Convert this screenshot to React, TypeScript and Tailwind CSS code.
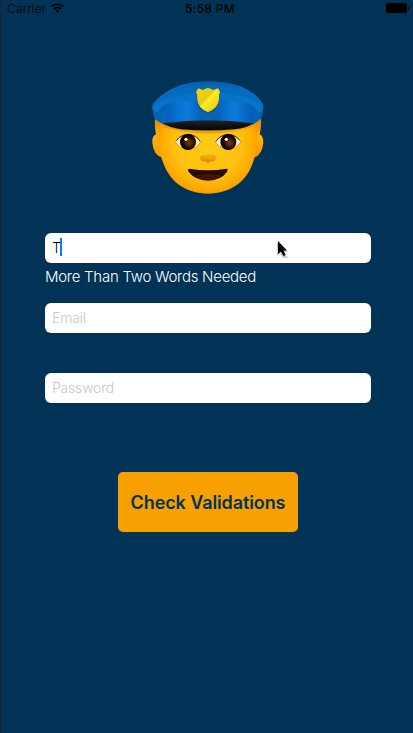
import React from "react";

function Officer() {
  return (
    <svg width="130" height="130" viewBox="0 0 390 390" aria-label="Police officer">
      <defs>
        <radialGradient id="face" cx="195" cy="215" r="168" gradientUnits="userSpaceOnUse">
          <stop offset="0" stopColor="#ffcb16" />
          <stop offset="0.6" stopColor="#ffc00f" />
          <stop offset="0.84" stopColor="#ffa900" />
          <stop offset="1" stopColor="#ee8500" />
        </radialGradient>
        <linearGradient id="ear" x1="0" y1="150" x2="0" y2="255" gradientUnits="userSpaceOnUse">
          <stop offset="0" stopColor="#ee8a00" />
          <stop offset="0.4" stopColor="#ffb30c" />
          <stop offset="1" stopColor="#f79a00" />
        </linearGradient>
        <linearGradient id="cap" x1="0" y1="28" x2="0" y2="130" gradientUnits="userSpaceOnUse">
          <stop offset="0" stopColor="#044c94" />
          <stop offset="0.25" stopColor="#0870c4" />
          <stop offset="1" stopColor="#0675d2" />
        </linearGradient>
        <linearGradient id="band" x1="50" y1="0" x2="340" y2="0" gradientUnits="userSpaceOnUse">
          <stop offset="0" stopColor="#0058ac" />
          <stop offset="0.2" stopColor="#0874d2" />
          <stop offset="0.28" stopColor="#0c7bdc" />
          <stop offset="0.42" stopColor="#0563b8" />
          <stop offset="0.6" stopColor="#0563b8" />
          <stop offset="0.77" stopColor="#0c7bdc" />
          <stop offset="1" stopColor="#0058ac" />
        </linearGradient>
        <linearGradient id="visor" x1="0" y1="140" x2="0" y2="175" gradientUnits="userSpaceOnUse">
          <stop offset="0" stopColor="#292929" />
          <stop offset="1" stopColor="#020202" />
        </linearGradient>
        <linearGradient id="badge" x1="160" y1="50" x2="230" y2="115" gradientUnits="userSpaceOnUse">
          <stop offset="0" stopColor="#f2d414" />
          <stop offset="0.43" stopColor="#e9ca10" />
          <stop offset="0.5" stopColor="#ffeb27" />
          <stop offset="1" stopColor="#e6c50c" />
        </linearGradient>
        <radialGradient id="iris" cx="0.58" cy="0.55" r="0.55">
          <stop offset="0" stopColor="#7b3900" />
          <stop offset="0.4" stopColor="#491e00" />
          <stop offset="0.8" stopColor="#050000" />
        </radialGradient>
        <linearGradient id="nose" x1="0" y1="244" x2="0" y2="274" gradientUnits="userSpaceOnUse">
          <stop offset="0" stopColor="#ffb90a" />
          <stop offset="1" stopColor="#df8000" />
        </linearGradient>
      </defs>
      <path d="M36 137Q34 164 39 187Q27 191 28 212Q31 249 57 256L334 256Q358 248 361 212Q361 191 350 187Q356 163 354 137Z" fill="url(#ear)" />
      <path d="M50 145C46 187 46 238 61 274C82 333 132 365 195 365C258 365 309 333 329 274C344 238 344 187 340 145Z" fill="url(#face)" />
      <path d="M60 157Q195 195 332 153L327 164Q195 205 62 166Z" fill="#e58b00" opacity=".6" />
      <path d="M28 105C28 84 77 52 115 38Q195 18 278 38C324 51 360 84 361 106Q361 121 354 139L331 158H62L36 141Q28 119 28 105Z" fill="url(#cap)" />
      <path d="M28 106C28 84 77 52 115 38Q195 18 278 38C324 51 360 84 361 106Q334 75 279 69Q195 55 111 69Q53 77 28 106Z" fill="#0569bb" opacity=".65" />
      <path d="M29 106Q31 130 36 142L58 155Q62 119 75 94Q53 102 42 124Q33 119 29 106ZM361 106Q358 130 353 142L332 155Q328 119 313 94Q337 104 348 124Q356 117 361 106Z" fill="#0057a5" opacity=".65" />
      <path d="M76 93Q195 76 312 93Q329 108 332 156Q195 137 61 156Q63 111 76 93Z" fill="url(#band)" />
      <path d="M60 154Q195 136 331 154Q311 169 274 172Q195 179 115 172Q79 167 60 154Z" fill="url(#visor)" />
      <path d="M166 50L179 55L195 48L212 55L225 50L232 62Q228 68 229 83Q229 110 195 124Q162 111 162 83Q163 68 159 62Z" fill="#003d77" opacity=".65" />
      <path d="M166 49L179 54L195 47L212 54L225 49L231 60Q227 67 228 82Q227 108 195 121Q163 108 163 82Q164 68 159 60Z" fill="url(#badge)" />
      <path d="M97 210Q110 188 136 187Q162 190 173 211Q158 231 134 232Q110 229 97 210Z" fill="#fff1d2" stroke="#d37d00" strokeWidth="2" />
      <path d="M217 211Q229 190 256 187Q282 189 294 210Q281 229 257 232Q232 230 217 211Z" fill="#fff1d2" stroke="#d37d00" strokeWidth="2" />
      <path d="M101 205Q113 188 136 187Q161 189 171 208M219 208Q230 189 256 187Q278 188 290 205" fill="none" stroke="#562900" strokeWidth="3" />
      <circle cx="135" cy="210" r="24" fill="url(#iris)" />
      <circle cx="256" cy="210" r="24" fill="url(#iris)" />
      <ellipse cx="129" cy="202" rx="5" ry="5" fill="#fff5db" />
      <ellipse cx="250" cy="202" rx="5" ry="5" fill="#fff5db" />
      <path d="M171 258Q174 246 185 249Q195 244 206 249Q217 246 219 258Q216 271 204 268Q195 275 186 268Q174 271 171 258Z" fill="url(#nose)" />
      <path d="M138 290Q195 299 251 290Q257 292 251 301Q234 325 195 326Q156 325 138 301Q132 293 138 290Z" fill="#280900" />
      <path d="M158 310Q195 301 232 310Q219 324 195 324Q172 323 158 310Z" fill="#491006" />
    </svg>
  );
}

function StatusBar() {
  return (
    <header className="grid h-[18px] grid-cols-[1fr_auto_1fr] items-start pl-[6px] pr-[3px] text-black">
      <div className="flex items-start gap-[5px]">
        <span className="text-[12px] font-light leading-[18px] tracking-[0.15px]">Carrier</span>
        <svg className="mt-[3px]" width="13" height="10" viewBox="0 0 13 10" fill="none" stroke="currentColor">
          <path d="M.8 3.5Q6.5-1.3 12.2 3.5M3 5.9Q6.5 3 10 5.9" strokeWidth="1.7" />
          <path d="M4.6 7.4Q6.5 6 8.4 7.4L6.5 9.5Z" fill="currentColor" stroke="none" />
        </svg>
      </div>
      <span className="ml-[3px] text-[12px] font-medium leading-[18px] tracking-[0.3px]">5:58 PM</span>
      <svg className="mt-[3px] justify-self-end" width="24" height="10" viewBox="0 0 24 10">
        <rect width="21" height="10" rx="1" />
        <path d="M22 3.8H22.6Q23.3 5 22.6 6.8H22Z" />
      </svg>
    </header>
  );
}

export default function App() {
  return (
    <div className="h-[733px] w-[413px] overflow-hidden border-l border-[#202124] bg-[#003355] font-['Inter','Liberation_Sans',sans-serif]">
      <StatusBar />
      <main className="flex flex-col pt-[54px]">
        <div className="ml-[142px] h-[130px] w-[130px]"><Officer /></div>
        <form className="ml-[44px] mt-[31px] flex w-[326px] flex-col" onSubmit={(event) => event.preventDefault()}>
          <div className="relative flex h-[30px] items-center rounded-[6px] bg-white pb-[2px] pl-[7px] text-[14px] font-light text-black">
            <span>T</span>
            <span className="-ml-px h-[18px] w-[2px] bg-[#087cf0]" />
            <svg className="absolute left-[231px] top-[8px]" width="14" height="19" viewBox="0 0 14 19">
              <path d="M1 1V15L4 12L7 17H12L8 11H12Z" fill="#c8c8c8" />
              <path d="M2 0V13L5 10.5L7.5 15L9.5 14L7.5 9.5H11Z" fill="#000" />
            </svg>
          </div>
          <p className="h-[40px] whitespace-nowrap pt-[4px] text-[15px] font-light leading-[20px] tracking-[-0.27px] text-white">More Than Two Words Needed</p>
          <input className="h-[30px] rounded-[6px] bg-white px-[7px] pb-[2px] text-[14px] font-light tracking-[-0.2px] outline-none placeholder:text-[#c7c7cd]" placeholder="Email" />
          <input type="password" className="mt-[40px] h-[30px] rounded-[6px] bg-white px-[7px] pb-[2px] text-[14px] font-light tracking-[-0.2px] outline-none placeholder:text-[#c7c7cd]" placeholder="Password" />
          <button className="ml-[73px] mt-[69px] h-[60px] w-[180px] whitespace-nowrap rounded-[5px] bg-[#f7a000] text-[18px] font-semibold tracking-[-0.1px] text-[#003355]">Check Validations</button>
        </form>
      </main>
    </div>
  );
}
